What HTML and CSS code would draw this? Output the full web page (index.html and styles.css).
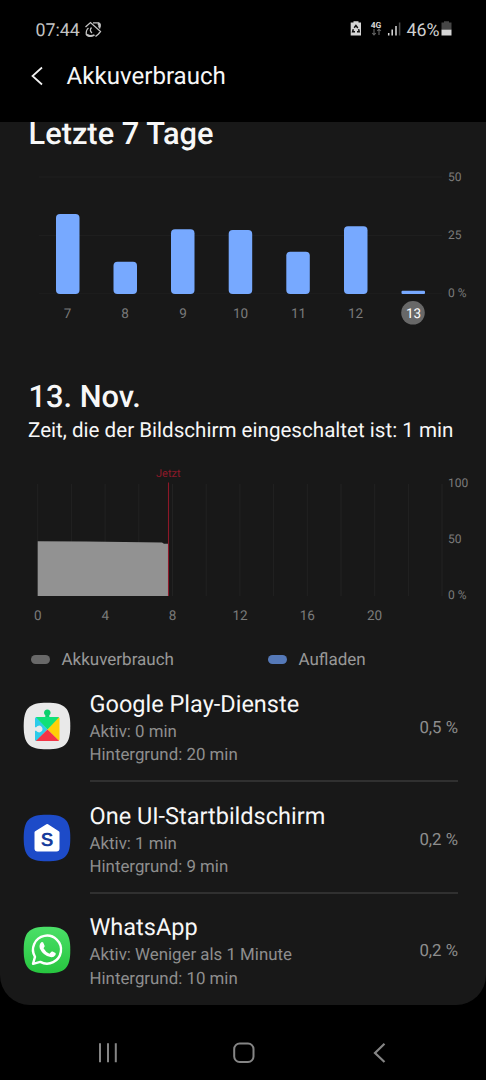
FILE: index.html
```html
<!DOCTYPE html>
<html lang="de">
<head>
<meta charset="utf-8">
<title>Akkuverbrauch</title>
<link rel="stylesheet" href="styles.css">
</head>
<body>
<div class="status">
  <span class="clock">07:44</span>
  <svg class="status-left" width="20" height="20" viewBox="0 0 20 20" fill="none" stroke="#c4c4c4" stroke-width="1.3"><path d="M1.500 7L6.500 2.500L16.500 11.500L14.500 14L11.500 16.500M9 2.800H14.500Q17.500 3.500 15.500 8.500M4.500 8Q1.800 10 2.300 14.500Q4.500 17.500 9 15.500M7.500 7.500Q5 10.500 8 13"/><path d="M3 14.500Q6 17 10.500 15M14 3.300Q16 5 15 7.500" stroke-width="1.800"/></svg>
  <span class="spacer"></span>
  <svg width="140" height="24" viewBox="0 0 140 24">
    <path d="M4.700 4.500H7.500V3.200H12.500V4.500H15V17.500H4.700z" fill="#d6d6d6"/>
    <path d="M8.200 9.800L9.900 7.500L11.800 10M12.600 11.200L13.200 13.800H11M9 13.800H6.600L7.300 11.300" fill="none" stroke="#111" stroke-width="1.500"/>
    <text class="net" x="24.700" y="9.800">4G</text>
    <path d="M28 11V17M26.200 15L28 17L29.800 15M33 17V11M31.200 13L33 11L34.800 13" fill="none" stroke="#666" stroke-width="1.100"/>
    <path d="M42.700 15V17.500M46.200 11.500V17.500M50 8V17.500" stroke="#ddd" stroke-width="1.500"/><path d="M53.600 4.500V17.500" stroke="#4a4a4a" stroke-width="1.500"/>
    <text class="pct" x="60.500" y="18">46%</text>
    <path d="M95.500 4.500H98V3.200H103V4.500H105.500V12H95.500z" fill="#464646"/><path d="M95.500 11.700H105.500V17.500H95.500z" fill="#d6d6d6"/>
  </svg>
</div>
<header class="bar">
  <svg width="14" height="20" viewBox="0 0 14 20" fill="none" stroke="#f2f2f2" stroke-width="1.700"><path d="M12 1.500L2.500 10L12 18.500"/></svg>
  <h1>Akkuverbrauch</h1>
</header>
<main class="panel">
  <h2 class="week">Letzte 7 Tage</h2>
  <svg class="chart" width="486" height="180" viewBox="0 160 486 180">
    <path d="M39 177H442M39 235.500H442M39 293.700H442" stroke="#1e1e1e"/>
    <g fill="#77a9ff">
      <rect x="56" y="214" width="23.500" height="80" rx="4"/>
      <rect x="113.500" y="261.700" width="23.500" height="32.300" rx="4"/>
      <rect x="171" y="229.300" width="23.500" height="64.700" rx="4"/>
      <rect x="228.700" y="230" width="23.500" height="64" rx="4"/>
      <rect x="286.300" y="251.700" width="23.500" height="42.300" rx="4"/>
      <rect x="344" y="226.300" width="23.500" height="67.700" rx="4"/>
      <rect x="401.500" y="290.700" width="23.500" height="3.300" rx="1"/>
    </g>
    <circle cx="413" cy="312.800" r="11.800" fill="#686868"/>
    <g class="tick mid">
      <text x="67.500" y="318">7</text><text x="125" y="318">8</text><text x="183" y="318">9</text><text x="240.500" y="318">10</text><text x="298.500" y="318">11</text><text x="355.500" y="318">12</text><text class="today" x="413.500" y="318">13</text>
    </g>
    <g class="tick scale"><text x="448" y="180.700">50</text><text x="448" y="239">25</text><text x="448" y="297.300">0 %</text></g>
  </svg>
  <h2 class="day">13. Nov.</h2>
  <p class="screen">Zeit, die der Bildschirm eingeschaltet ist: 1 min</p>
  <svg class="chart" width="486" height="180" viewBox="0 460 486 180">
    <path d="M37.700 484V596M71.400 484V596M105.100 484V596M138.800 484V596M172.500 484V596M206.200 484V596M239.900 484V596M273.600 484V596M307.300 484V596M341 484V596M374.700 484V596M408.400 484V596M442 484V596" stroke="#222"/>
    <path d="M37.700 541.200L86 541.500L162 542.500L164 543.700H168.300V596H37.700z" fill="#929292"/>
    <path d="M168.500 482.500V596" stroke="#8c1828" stroke-width="1.100"/>
    <text class="now" x="168.300" y="477">Jetzt</text>
    <g class="tick mid"><text x="37.800" y="620">0</text><text x="105.200" y="620">4</text><text x="172.500" y="620">8</text><text x="240" y="620">12</text><text x="307.300" y="620">16</text><text x="374.500" y="620">20</text></g>
    <g class="tick scale"><text x="448" y="486.700">100</text><text x="448" y="543.200">50</text><text x="448" y="599.200">0 %</text></g>
  </svg>
  <div class="legend">
    <div class="key"><i class="pill used"></i>Akkuverbrauch</div>
    <div class="key"><i class="pill charging"></i>Aufladen</div>
  </div>
  <ul class="apps">
    <li class="app">
      <svg class="icon" width="48" height="48" viewBox="0 0 48 48">
        <path d="M24 .7C42 .7 47.300 6 47.300 24S42 47.300 24 47.300S.7 42 .7 24S6 .7 24 .7z" fill="#e9e9e9"/>
        <path d="M22.300 15.500V13.300A3.300 3.300 0 1 1 26.300 13.300V15.500z" fill="#0bcf6c"/>
        <path d="M13.500 15Q12 15 12 16.500V37.500Q12 39 13.500 39L24.500 27.500z" fill="#2dcbe9"/>
        <path d="M35 15Q36.500 15 36.500 16.500V37.500Q36.500 38.500 35.500 38.500L24.500 27.500z" fill="#ffd008"/>
        <path d="M13 15.300L24.500 27.500L36 15.300Q35.500 15 35 15H13.500z" fill="#10e078"/>
        <path d="M13 38.700L24.500 27.500L36 38.700Q35.500 39 35 39H13.500z" fill="#f33546"/>
        <path d="M12 25.300H13.200A3.400 3.400 0 1 1 13.200 28.700H12z" fill="#e9e9e9"/>
      </svg>
      <div class="info"><h3>Google Play-Dienste</h3><p>Aktiv: 0 min</p><p>Hintergrund: 20 min</p></div>
      <span class="share">0,5 %</span>
    </li>
    <li class="app">
      <svg class="icon" width="48" height="48" viewBox="0 0 48 48">
        <path d="M24 .7C42 .7 47.300 6 47.300 24S42 47.300 24 47.300S.7 42 .7 24S6 .7 24 .7z" fill="#1d4bc8"/>
        <path d="M24.200 11.500L35 18.500V34.500Q35 36 33.500 36H14.500Q13 36 13 34.500V18.500z" fill="#fff" stroke="#fff" stroke-width="3" stroke-linejoin="round"/>
        <text class="s" x="24" y="32">S</text>
      </svg>
      <div class="info"><h3>One UI-Startbildschirm</h3><p>Aktiv: 1 min</p><p>Hintergrund: 9 min</p></div>
      <span class="share">0,2 %</span>
    </li>
    <li class="app">
      <svg class="icon" width="48" height="48" viewBox="0 0 48 48">
        <defs><linearGradient id="wa" x2="0" y2="1"><stop stop-color="#4be068"/><stop offset="1" stop-color="#27c53f"/></linearGradient></defs>
        <path d="M24 .7C42 .7 47.300 6 47.300 24S42 47.300 24 47.300S.7 42 .7 24S6 .7 24 .7z" fill="url(#wa)"/>
        <path d="M10 37.800L12 30.800A14 14 0 1 1 17.300 35.900z" fill="none" stroke="#fff" stroke-width="2.400" stroke-linejoin="round"/>
        <path d="M18.300 16.300Q19.500 15.600 20.200 16.600L21.700 20Q21.900 20.600 20.500 22.200Q23 26.500 26.500 27.700L28.300 25.700Q29 25.300 29.600 25.600L32.500 27Q33 27.500 32.500 29Q30.500 31.800 27.500 31.100Q20 29.500 16.800 22.500Q15.800 18.500 18.300 16.300z" fill="#fff"/>
      </svg>
      <div class="info"><h3>WhatsApp</h3><p>Aktiv: Weniger als 1 Minute</p><p>Hintergrund: 10 min</p></div>
      <span class="share">0,2 %</span>
    </li>
  </ul>
</main>
<nav class="nav">
  <svg width="22" height="22" viewBox="0 0 22 22" stroke="#858585" stroke-width="2"><path d="M3 1.300V20.300M11 1.300V20.300M18.800 1.300V20.300"/></svg>
  <svg width="22" height="22" viewBox="0 0 22 22" fill="none" stroke="#858585" stroke-width="2"><rect x="1.200" y="1.500" width="19.300" height="18.500" rx="5.500"/></svg>
  <svg width="22" height="22" viewBox="0 0 22 22" fill="none" stroke="#858585" stroke-width="2.200"><path d="M16.500 1.800L7 11L16.500 20"/></svg>
</nav>
</body>
</html>
```
FILE: styles.css
```css
* { box-sizing: border-box; margin: 0; padding: 0; }
body { width: 486px; height: 1080px; overflow: hidden; background: #000; color: #f7f7f7; font-family: Roboto, sans-serif; text-rendering: geometricPrecision; }
svg { display: block; flex: none; }
.status { display: flex; align-items: center; height: 60px; padding: 0 0 0 35.5px; color: #c4c4c4; }
.clock { font-size: 17.8px; line-height: 24px; width: 48.5px; padding-top: 1px; }
.spacer { flex: 1; }
.net { font-size: 8.5px; font-weight: 700; fill: #d6d6d6; }
.pct { font-size: 17.8px; fill: #cfcfcf; }
.bar { display: flex; align-items: center; height: 62px; padding: 0 0 30px 30px; gap: 22.5px; }
.bar h1 { font-size: 24.1px; line-height: 32px; font-weight: 400; }
.panel { height: 883px; overflow: hidden; background: #181818; border-radius: 0 0 30px 30px; }
h2 { font-size: 30.8px; font-weight: 500; line-height: 40px; padding-left: 28.5px; }
.week { margin-top: -8px; height: 46px; }
.day { margin-top: 37px; }
.screen { font-size: 20.6px; line-height: 28px; padding-left: 28px; height: 43px; white-space: nowrap; }
.tick { fill: #7b7b7b; }
.mid { font-size: 13.5px; text-anchor: middle; }
.scale { font-size: 12px; }
.today { fill: #fff; }
.now { font-size: 11px; fill: #8c1828; text-anchor: middle; }
.legend { display: grid; grid-template-columns: 237px 1fr; padding: 5px 0 0 30.5px; height: 30px; }
.key { display: flex; align-items: center; gap: 12px; height: 29px; font-size: 17px; color: #989898; }
.pill { width: 19px; height: 9.500px; border-radius: 5px; }
.used { background: #686868; }
.charging { background: #5579b8; }
.apps { list-style: none; }
.app { display: grid; grid-template-columns: 66.5px 1fr auto; height: 111.600px; padding: 0 28px 0 23px; }
.app:first-child { height: 112px; }
.icon { margin-top: 32px; }
.info { padding-top: 17.500px; border-bottom: 2px solid #303030; white-space: nowrap; }
.app:last-child .info { border: 0; }
.info h3 { font-size: 23.500px; font-weight: 400; line-height: 32px; padding-bottom: 1px; box-sizing: content-box; }
.info p { font-size: 16.850px; line-height: 23.700px; color: #8e8e8e; }
.share { font-size: 16.800px; line-height: 24px; padding-top: 45.700px; color: #8e8e8e; border-bottom: 2px solid #303030; }
.app:last-child .share { border: 0; }
.s { font-family: "Liberation Sans", sans-serif; font-size: 19px; font-weight: 700; fill: #173b9c; text-anchor: middle; }
.nav { display: flex; justify-content: space-between; padding: 37px 96px 0 97px; }
```
